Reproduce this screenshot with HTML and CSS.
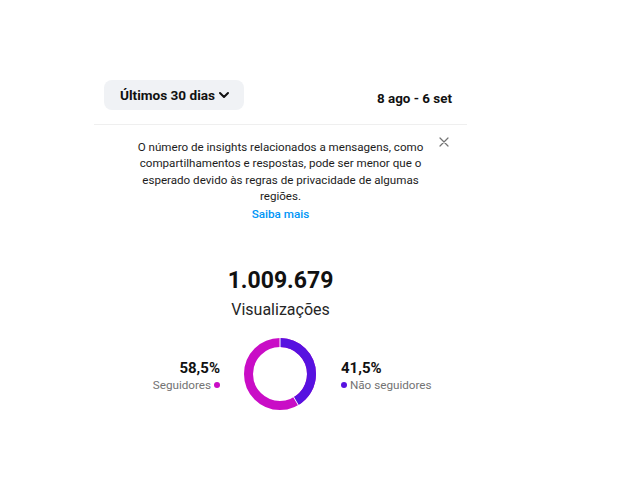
FILE: index.html
```html
<!DOCTYPE html>
<html lang="pt">
<head>
<meta charset="utf-8">
<link rel="stylesheet" href="styles.css">
</head>
<body>
<div class="panel">
  <div class="header">
    <button class="range">Últimos 30 dias
      <svg class="chev" width="12" height="12" viewBox="0 0 12 12"><path d="M2 4 L6 8 L10 4" fill="none" stroke="#111" stroke-width="2" stroke-linecap="round" stroke-linejoin="round"/></svg>
    </button>
    <div class="dates">8 ago - 6 set</div>
  </div>
  <div class="notice">
    <p class="notice-text">O número de insights relacionados a mensagens, como compartilhamentos e respostas, pode ser menor que o esperado devido às regras de privacidade de algumas regiões.</p>
    <a class="more">Saiba mais</a>
    <svg class="close" width="10" height="10" viewBox="0 0 10 10"><path d="M1 1 L9 9 M9 1 L1 9" stroke="#737373" stroke-width="1.2" stroke-linecap="round"/></svg>
  </div>
  <div class="total">1.009.679</div>
  <div class="total-label">Visualizações</div>
  <div class="chart-row">
    <div class="legend left">
      <div class="pct">58,5%</div>
      <div class="lbl">Seguidores <span class="dot mag"></span></div>
    </div>
    <svg class="donut" width="72" height="72" viewBox="0 0 72 72">
      <g transform="rotate(-90 36 36)">
        <circle cx="36" cy="36" r="31.5" fill="none" stroke="#c90dc6" stroke-width="9"/>
        <circle cx="36" cy="36" r="31.5" fill="none" stroke="#5712e0" stroke-width="9" stroke-dasharray="82.1 200"/>
      </g>
      <line x1="36" y1="0" x2="36" y2="10" stroke="#fff" stroke-width="1"/>
      <line x1="54.6" y1="67.6" x2="49.4" y2="58.7" stroke="#fff" stroke-width="1"/>
    </svg>
    <div class="legend right">
      <div class="pct">41,5%</div>
      <div class="lbl"><span class="dot pur"></span> Não seguidores</div>
    </div>
  </div>
</div>
</body>
</html>
```
FILE: styles.css
```css
* { box-sizing: border-box; }
body {
  margin: 0;
  background: #fff;
  font-family: Roboto, "Liberation Sans", Arial, sans-serif;
  color: #111;
}
.panel {
  margin-left: 94px;
  width: 373px;
  padding-top: 80px;
}
.header {
  display: flex;
  justify-content: space-between;
  align-items: center;
  padding: 0 15px 14px 10px;
  border-bottom: 1px solid #efefef;
}
.range {
  display: flex;
  align-items: center;
  gap: 3px;
  height: 30px;
  padding: 0 14px 0 16px;
  border: none;
  border-radius: 8px;
  background: #f0f2f5;
  font-family: inherit;
  font-size: 13.6px;
  font-weight: 700;
  color: #111;
}
.chev { display: block; }
.dates {
  font-size: 13.4px;
  font-weight: 700;
  margin-top: 6px;
}
.notice {
  position: relative;
  text-align: center;
  padding-top: 14px;
}
.notice-text {
  margin: 0 auto;
  width: 290px;
  font-size: 11.6px;
  line-height: 16.3px;
  color: #1c1c1c;
}
.more {
  display: block;
  margin-top: 2px;
  font-size: 11.7px;
  font-weight: 500;
  color: #0095f6;
  line-height: 16px;
}
.close {
  position: absolute;
  right: 18px;
  top: 12px;
}
.total {
  margin-top: 45px;
  text-align: center;
  font-size: 23px;
  font-weight: 700;
  line-height: 28px;
}
.total-label {
  margin-top: 5px;
  text-align: center;
  font-size: 16px;
  line-height: 20px;
  color: #262626;
}
.chart-row {
  display: flex;
  align-items: center;
  margin-top: 18px;
}
.legend { width: 126px; padding-top: 3px; }
.legend.left { text-align: right; margin-right: 24px; }
.legend.right { margin-left: 25px; }
.pct { font-size: 15px; font-weight: 700; line-height: 18px; }
.lbl { font-size: 11.7px; color: #737373; line-height: 16px; }
.dot {
  display: inline-block;
  width: 6px; height: 6px;
  border-radius: 50%;
  vertical-align: 1px;
}
.dot.mag { background: #c90dc6; }
.dot.pur { background: #5712e0; }
.donut { display: block; flex: none; }
```
